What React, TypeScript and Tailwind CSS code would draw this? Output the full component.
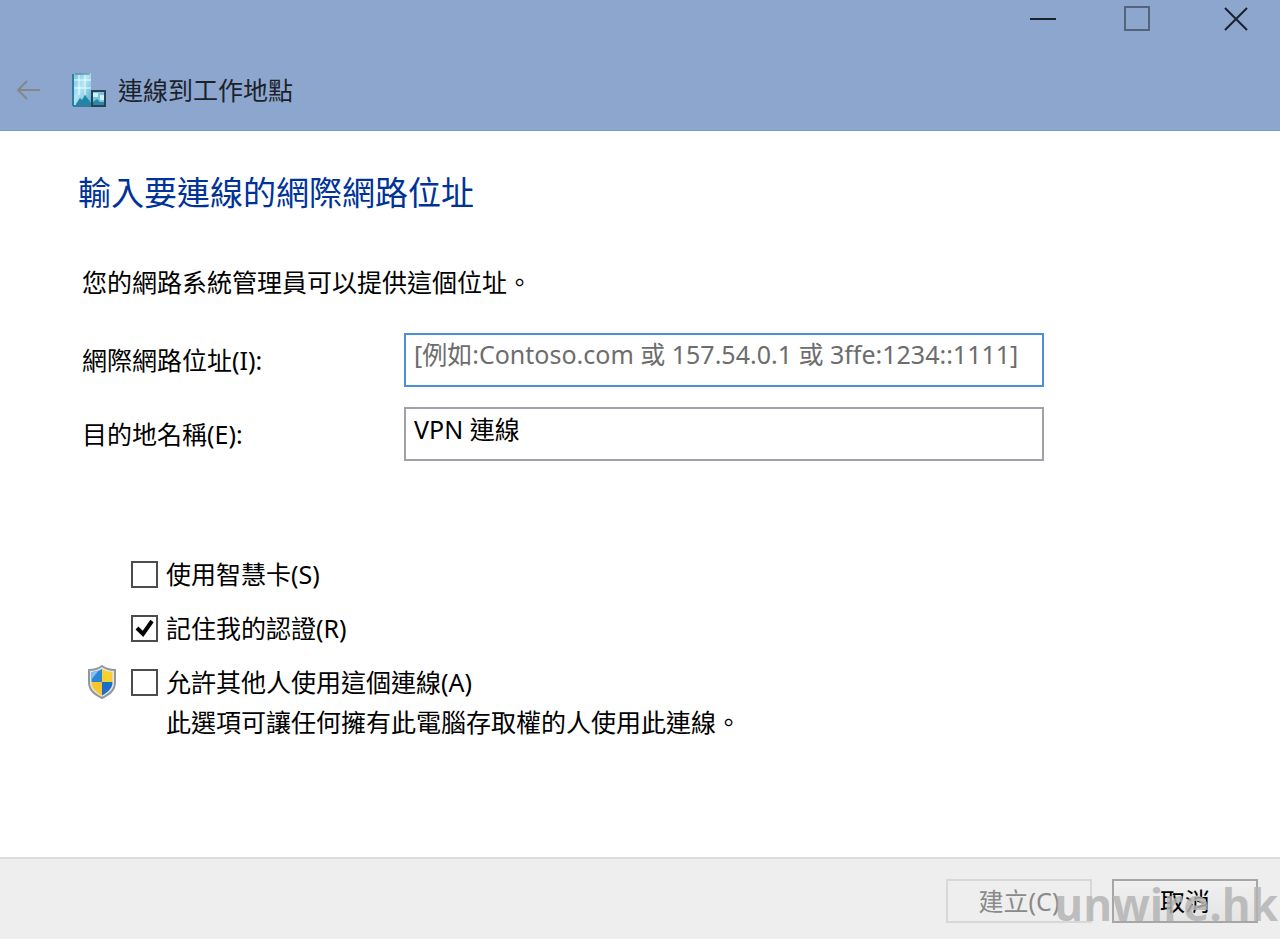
import React, { useState } from 'react';

const BackArrow = () => (
  <svg width="24" height="20" viewBox="0 0 24 20" fill="none" stroke="#85868c" strokeWidth="2" aria-hidden="true">
    <path d="M24 10H2M11 1L2 10l9 9" />
  </svg>
);

const OfficeIcon = () => (
  <svg width="34" height="34" viewBox="0 0 34 34" className="mr-3" aria-hidden="true">
    <defs>
      <linearGradient id="tower" x1="0" y1="0" x2="1" y2="1">
        <stop offset="0" stopColor="#6cc3df" />
        <stop offset="0.45" stopColor="#b4e6f5" />
        <stop offset="1" stopColor="#4aaccb" />
      </linearGradient>
    </defs>
    <path d="M1 1L19 0v33H1z" fill="url(#tower)" />
    <path d="M3 1h15" stroke="#4d7690" strokeWidth="1" />
    <path d="M7 2v20M13 2v20M2 7h17M2 15h17" stroke="#eefbfe" strokeWidth="1" />
    <path d="M4 31l4-6 2 2 3-5 6 8v2H4z" fill="#2384a6" />
    <path d="M1 1v32M1 33h18" stroke="#2f7f9f" strokeWidth="2" />
    <path d="M19 17h15v17H19z" fill="#2a4354" />
    <path d="M21 19h11v12H21z" fill="#7cc4de" />
    <path d="M21 20h5v4h-5zM28 22h4v5h-4z" fill="#cdf0f9" />
    <path d="M21 31v-2l4-3 3 3h4v3H21z" fill="#2c86a5" />
  </svg>
);

const ShieldIcon = () => (
  <svg width="32" height="34" viewBox="0 0 30 34" aria-hidden="true">
    <defs>
      <clipPath id="shield">
        <path d="M15 4c3 2 7 3 10.500 3v10c0 6-4 10-10.500 13.500C8.500 27 4.500 23 4.500 17V7C8 7 12 6 15 4z" />
      </clipPath>
    </defs>
    <path
      d="M15 1c4 3 8 4 13 4v12c0 8-5 12-13 16C7 29 2 25 2 17V5c5 0 9-1 13-4z"
      fill="#e3e5e6"
      stroke="#93979a"
      strokeWidth="2"
    />
    <g clipPath="url(#shield)">
      <path d="M0 0h15v17H0z" fill="#2b86d6" />
      <path d="M15 0h15v17H15z" fill="#fad02f" />
      <path d="M0 17h15v17H0z" fill="#f8c62a" />
      <path d="M15 17h15v17H15z" fill="#1b6fc6" />
      <path d="M4 7l8-2-8 10z" fill="#83c2ee" />
    </g>
  </svg>
);

const WindowControls = () => (
  <div className="flex h-[38px] justify-end text-[#1c222c]">
    <button aria-label="最小化" className="flex w-[94px] items-center justify-center">
      <svg width="26" height="26" viewBox="0 0 26 26" stroke="currentColor" strokeWidth="2">
        <path d="M0 13h26" />
      </svg>
    </button>
    <button aria-label="最大化" className="flex w-[94px] items-center justify-center">
      <svg width="26" height="26" viewBox="0 0 26 26" fill="none" stroke="#55647c" strokeWidth="2">
        <path d="M1 1h24v23H1z" />
      </svg>
    </button>
    <button aria-label="關閉" className="flex w-24 items-center justify-center pl-2">
      <svg width="26" height="26" viewBox="0 0 26 26" stroke="currentColor" strokeWidth="2">
        <path d="M2 2l22 22M24 2L2 24" />
      </svg>
    </button>
  </div>
);

type CheckRowProps = {
  id: string;
  label: string;
  checked: boolean;
  onChange: (value: boolean) => void;
  shield?: boolean;
};

const CheckRow = ({ id, label, checked, onChange, shield }: CheckRowProps) => (
  <div className="flex h-[34px] items-center">
    <div className="w-[45px]">{shield && <ShieldIcon />}</div>
    <div className="mr-2 grid size-[27px]">
      <input
        id={id}
        type="checkbox"
        checked={checked}
        onChange={(e) => onChange(e.target.checked)}
        className="col-start-1 row-start-1 size-[27px] appearance-none border-2 border-[#4c4c4c] bg-white"
      />
      {checked && (
        <svg viewBox="0 0 27 27" className="pointer-events-none col-start-1 row-start-1" fill="none" stroke="#000" strokeWidth="4">
          <path d="M6 13l6 6 9-13" />
        </svg>
      )}
    </div>
    <label htmlFor={id}>{label}</label>
  </div>
);

const App = () => {
  const [address, setAddress] = useState('');
  const [name, setName] = useState('VPN 連線');
  const [smartCard, setSmartCard] = useState(false);
  const [remember, setRemember] = useState(true);
  const [allowOthers, setAllowOthers] = useState(false);

  return (
    <div className="flex min-h-screen flex-col bg-white font-['Noto_Sans','Noto_Sans_CJK_TC',sans-serif] text-[25px] leading-[34px] text-black">
      <header className="border-b border-[#7f9bc6] bg-[#8da6cd] pb-5">
        <WindowControls />
        <div className="flex h-[72px] items-center pt-8 pl-4">
          <button disabled aria-label="上一步" className="mr-8">
            <BackArrow />
          </button>
          <OfficeIcon />
          <span className="text-[#1c222c]">連線到工作地點</span>
        </div>
      </header>

      <main className="flex-1 px-[82px] pt-[38px]">
        <h1 className="-ml-1 text-[33px] leading-[48px] text-[#003399]">輸入要連線的網際網路位址</h1>
        <p className="mt-12">您的網路系統管理員可以提供這個位址。</p>

        <form className="mt-[34px]" onSubmit={(e) => e.preventDefault()}>
          <div className="flex items-center">
            <label htmlFor="address" className="w-[322px] shrink-0">網際網路位址(I):</label>
            <input
              id="address"
              type="text"
              value={address}
              onChange={(e) => setAddress(e.target.value)}
              placeholder="[例如:Contoso.com 或 157.54.0.1 或 3ffe:1234::1111]"
              className="h-[54px] w-full max-w-[640px] border-2 border-[#4a8fd8] bg-white px-2 pb-3 outline-none placeholder:text-[#6d6d6d]"
            />
          </div>
          <div className="mt-5 flex items-center">
            <label htmlFor="name" className="w-[322px] shrink-0">目的地名稱(E):</label>
            <input
              id="name"
              type="text"
              value={name}
              onChange={(e) => setName(e.target.value)}
              className="h-[54px] w-full max-w-[640px] border-2 border-[#a0a0a8] bg-white px-2 pb-3 outline-none"
            />
          </div>

          <div className="mt-24 ml-1 flex flex-col gap-5">
            <CheckRow id="smart" label="使用智慧卡(S)" checked={smartCard} onChange={setSmartCard} />
            <CheckRow id="remember" label="記住我的認證(R)" checked={remember} onChange={setRemember} />
            <CheckRow id="others" label="允許其他人使用這個連線(A)" checked={allowOthers} onChange={setAllowOthers} shield />
          </div>
          <p className="mt-[6px] ml-[84px]">此選項可讓任何擁有此電腦存取權的人使用此連線。</p>
        </form>
      </main>

      <footer className="relative flex h-[82px] items-center justify-end gap-5 border-t-2 border-[#dcdcdc] bg-[#eeeeee] pt-1 pr-[22px]">
        <button disabled className="h-11 w-[146px] border-2 border-[#d8d8d8] text-[#8a8a8a]">建立(C)</button>
        <button className="h-11 w-[146px] border-2 border-[#a6a6a6] bg-linear-to-b from-[#f0f0f0] to-[#e4e4e4]">取消</button>
        <span className="pointer-events-none absolute right-0.5 bottom-[5px] font-['Open_Sans',sans-serif] text-[44px] leading-[60px] font-bold text-[#b4b4b4]/85">
          unwire.hk
        </span>
      </footer>
    </div>
  );
};

export default App;
